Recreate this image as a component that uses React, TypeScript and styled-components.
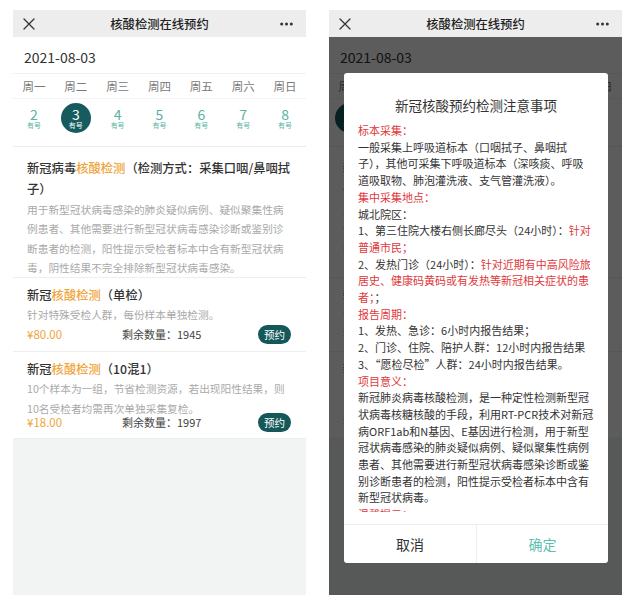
import React from 'react';
import styled, { createGlobalStyle } from 'styled-components';

const GlobalStyle = createGlobalStyle`
  html, body {
    margin: 0;
    padding: 0;
    background: #fff;
    font-family: "Noto Sans CJK SC", "Noto Sans", sans-serif;
  }
`;

const Page = styled.div`
  display: flex;
  gap: 23px;
  padding: 10px 0 0 13px;
`;

const Phone = styled.div`
  position: relative;
  width: 293px;
  height: 585px;
  display: flex;
  flex-direction: column;
  background: #fff;
  overflow: hidden;
`;

const Header = styled.div`
  height: 27px;
  flex: none;
  display: grid;
  grid-template-columns: 40px 1fr 40px;
  align-items: center;
  background: #ededed;
`;

const HeaderTitle = styled.div`
  text-align: center;
  font-size: 12.3px;
  font-weight: 500;
  color: #222;
`;

const CloseBtn = styled.svg`
  justify-self: start;
  margin-left: 10px;
`;

const MoreBtn = styled.svg`
  justify-self: end;
  margin-right: 13px;
`;

const Body = styled.div`
  position: relative;
  flex: 1;
  display: flex;
  flex-direction: column;
`;

const DateLine = styled.div`
  height: 32px;
  padding: 4px 0 0 11px;
  line-height: 32px;
  font-size: 14px;
  color: #333;
  border-bottom: 1px solid #f2f2f2;
`;

const WeekRow = styled.div`
  display: grid;
  grid-template-columns: repeat(7, 1fr);
  height: 24px;
  line-height: 24px;
  text-align: center;
  font-size: 11.5px;
  color: #7a7a7a;
  border-bottom: 1px solid #f3f3f3;
`;

const DayRow = styled.div`
  display: grid;
  grid-template-columns: repeat(7, 1fr);
  height: 43px;
  padding-top: 4px;
  justify-items: center;
  align-items: start;
  border-bottom: 1px solid #ececec;
`;

const DayCircle = styled.div<{ $active?: boolean }>`
  width: 30px;
  height: 30px;
  border-radius: 50%;
  display: flex;
  flex-direction: column;
  align-items: center;
  justify-content: center;
  background: ${p => (p.$active ? '#165c5e' : 'transparent')};
  color: ${p => (p.$active ? '#fff' : '#57b3a3')};
`;

const DayNum = styled.div`
  font-size: 14px;
  line-height: 14px;
`;

const DayTag = styled.div`
  font-size: 7px;
  line-height: 8px;
`;

const Card = styled.div<{ $pt: number; $pb: number }>`
  padding: ${p => p.$pt}px 15px ${p => p.$pb}px 14px;
  border-bottom: 1px solid #eeeeee;
`;

const Title = styled.div<{ $lh: number }>`
  font-size: 12.3px;
  line-height: ${p => p.$lh}px;
  font-weight: 500;
  color: #333;
  white-space: nowrap;
`;

const Hl = styled.span`
  color: #f0a43a;
`;

const Desc = styled.div<{ $lh: number }>`
  font-size: 10.7px;
  line-height: ${p => p.$lh}px;
  color: #a9a9a9;
  white-space: nowrap;
`;

const PriceRow = styled.div<{ $shift?: number }>`
  display: flex;
  align-items: center;
  height: 20px;
  margin-top: ${p => p.$shift ?? 0}px;
`;

const Price = styled.div`
  width: 95px;
  font-size: 11.5px;
  color: #f0a43a;
`;

const Stock = styled.div`
  flex: 1;
  font-size: 11px;
  color: #444;
`;

const BookButton = styled.div`
  width: 33px;
  height: 19px;
  border-radius: 10px;
  background: #14585a;
  color: #fff;
  font-size: 10.5px;
  line-height: 19px;
  text-align: center;
`;

const Filler = styled.div`
  flex: 1;
  background: #f2f3f3;
`;

const Overlay = styled.div`
  position: absolute;
  inset: 0;
  display: flex;
  padding: 36px 14px 32px 15px;
  background: rgba(0, 0, 0, 0.64);
`;

const Modal = styled.div`
  flex: 1;
  display: flex;
  flex-direction: column;
  background: #fff;
  border-radius: 3px;
  overflow: hidden;
`;

const ModalTitle = styled.div`
  padding-top: 22px;
  font-size: 13.5px;
  line-height: 20px;
  text-align: center;
  color: #333;
`;

const ModalBody = styled.div`
  margin-top: 7px;
  height: 390px;
  overflow: hidden;
  padding: 0 14px;
  font-size: 11px;
  line-height: 16.7px;
  color: #333;
`;

const NoteLine = styled.div`
  white-space: nowrap;
`;

const Red = styled.span`
  color: #e0383d;
`;

const Footer = styled.div`
  margin-top: auto;
  height: 38px;
  display: grid;
  grid-template-columns: 1fr 1fr;
  border-top: 1px solid #eeeeee;
`;

const FooterButton = styled.div<{ $primary?: boolean }>`
  display: flex;
  align-items: center;
  justify-content: center;
  font-size: 14px;
  color: ${p => (p.$primary ? '#5cbfb0' : '#333')};
  border-left: ${p => (p.$primary ? '1px solid #eeeeee' : 'none')};
`;

const weekDays = ['周一', '周二', '周三', '周四', '周五', '周六', '周日'];
const dayNums = [2, 3, 4, 5, 6, 7, 8];

type Seg = { t: string; red?: boolean };
const r = (t: string): Seg => ({ t, red: true });
const b = (t: string): Seg => ({ t });

const notice: Seg[][] = [
  [r('标本采集：')],
  [b('一般采集上呼吸道标本（口咽拭子、鼻咽拭')],
  [b('子），其他可采集下呼吸道标本（深咳痰、呼吸')],
  [b('道吸取物、肺泡灌洗液、支气管灌洗液）。')],
  [r('集中采集地点：')],
  [b('城北院区：')],
  [b('1、第三住院大楼右侧长廊尽头（24小时）：'), r('针对')],
  [r('普通市民；')],
  [b('2、发热门诊（24小时）：'), r('针对近期有中高风险旅')],
  [r('居史、健康码黄码或有发热等新冠相关症状的患')],
  [r('者；'), b('；')],
  [r('报告周期：')],
  [b('1、发热、急诊：6小时内报告结果；')],
  [b('2、门诊、住院、陪护人群：12小时内报告结果')],
  [b('3、“愿检尽检”人群：24小时内报告结果。')],
  [r('项目意义：')],
  [b('新冠肺炎病毒核酸检测，是一种定性检测新型冠')],
  [b('状病毒核糖核酸的手段，利用RT-PCR技术对新冠')],
  [b('病ORF1ab和N基因、E基因进行检测，用于新型')],
  [b('冠状病毒感染的肺炎疑似病例、疑似聚集性病例')],
  [b('患者、其他需要进行新型冠状病毒感染诊断或鉴')],
  [b('别诊断患者的检测，阳性提示受检者标本中含有')],
  [b('新型冠状病毒。')],
  [r('温馨提示：')],
];

const CloseIcon = () => (
  <CloseBtn width="12" height="12" viewBox="0 0 12 12">
    <path d="M1 1 L11 11 M11 1 L1 11" stroke="#333" strokeWidth="1.3" strokeLinecap="round" />
  </CloseBtn>
);

const MoreIcon = () => (
  <MoreBtn width="13" height="4" viewBox="0 0 13 4">
    <circle cx="1.7" cy="2" r="1.5" fill="#333" />
    <circle cx="6.5" cy="2" r="1.5" fill="#333" />
    <circle cx="11.3" cy="2" r="1.5" fill="#333" />
  </MoreBtn>
);

const Screen = ({ selected, withDialog }: { selected: number; withDialog?: boolean }) => (
  <Phone>
    <Header>
      <CloseIcon />
      <HeaderTitle>核酸检测在线预约</HeaderTitle>
      <MoreIcon />
    </Header>
    <Body>
      <DateLine>2021-08-03</DateLine>
      <WeekRow>
        {weekDays.map(d => (
          <div key={d}>{d}</div>
        ))}
      </WeekRow>
      <DayRow>
        {dayNums.map((n, i) => (
          <DayCircle key={n} $active={i === selected}>
            <DayNum>{n}</DayNum>
            <DayTag>有号</DayTag>
          </DayCircle>
        ))}
      </DayRow>

      <Card $pt={11} $pb={0}>
        <Title $lh={21}>
          新冠病毒<Hl>核酸检测</Hl>（检测方式：采集口咽/鼻咽拭
          <br />
          子）
        </Title>
        <Desc $lh={19.25}>
          用于新型冠状病毒感染的肺炎疑似病例、疑似聚集性病
          <br />
          例患者、其他需要进行新型冠状病毒感染诊断或鉴别诊
          <br />
          断患者的检测，阳性提示受检者标本中含有新型冠状病
          <br />
          毒，阴性结果不完全排除新型冠状病毒感染。
        </Desc>
      </Card>

      <Card $pt={7} $pb={7}>
        <Title $lh={20}>
          新冠<Hl>核酸检测</Hl>（单检）
        </Title>
        <Desc $lh={19}>针对特殊受检人群，每份样本单独检测。</Desc>
        <PriceRow>
          <Price>¥80.00</Price>
          <Stock>剩余数量：1945</Stock>
          <BookButton>预约</BookButton>
        </PriceRow>
      </Card>

      <Card $pt={7} $pb={6}>
        <Title $lh={20}>
          新冠<Hl>核酸检测</Hl>（10混1）
        </Title>
        <Desc $lh={19.5}>
          10个样本为一组，节省检测资源，若出现阳性结果，则
          <br />
          10名受检者均需再次单独采集复检。
        </Desc>
        <PriceRow $shift={-6}>
          <Price>¥18.00</Price>
          <Stock>剩余数量：1997</Stock>
          <BookButton>预约</BookButton>
        </PriceRow>
      </Card>

      <Filler />

      {withDialog && (
        <Overlay>
          <Modal>
            <ModalTitle>新冠核酸预约检测注意事项</ModalTitle>
            <ModalBody>
              {notice.map((line, i) => (
                <NoteLine key={i}>
                  {line.map((s, j) => (s.red ? <Red key={j}>{s.t}</Red> : <span key={j}>{s.t}</span>))}
                </NoteLine>
              ))}
            </ModalBody>
            <Footer>
              <FooterButton>取消</FooterButton>
              <FooterButton $primary>确定</FooterButton>
            </Footer>
          </Modal>
        </Overlay>
      )}
    </Body>
  </Phone>
);

export default function App() {
  return (
    <>
      <GlobalStyle />
      <Page>
        <Screen selected={1} />
        <Screen selected={0} withDialog />
      </Page>
    </>
  );
}
